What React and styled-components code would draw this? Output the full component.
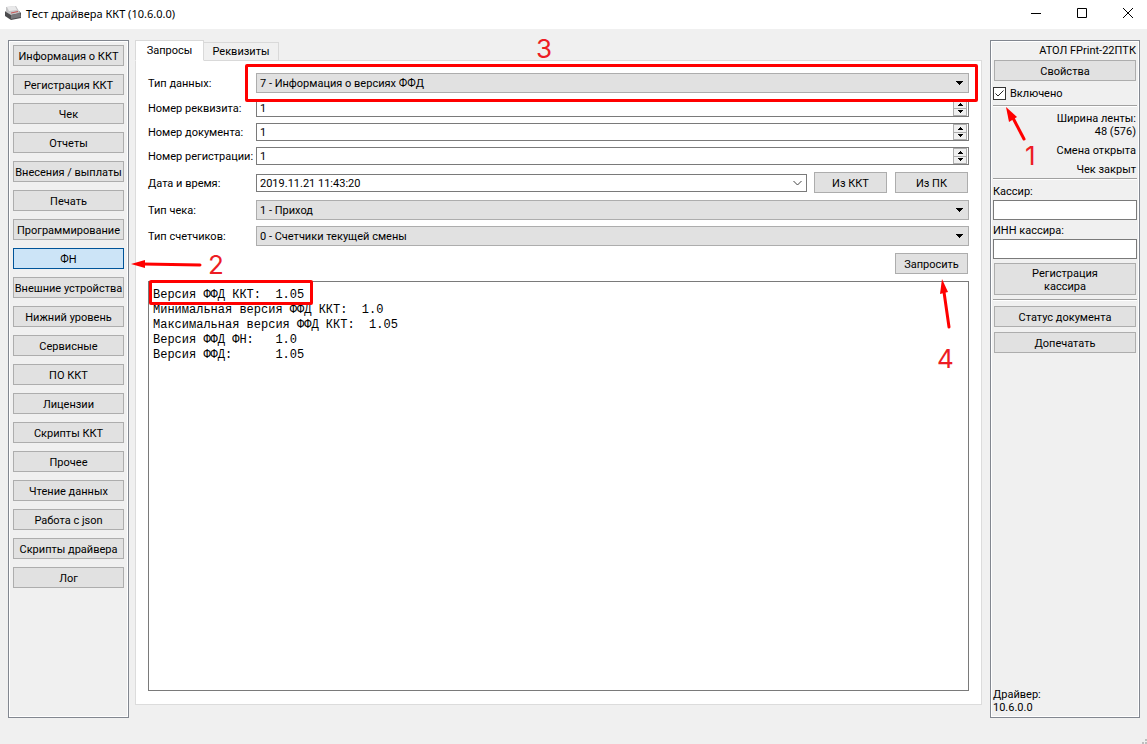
import styled, { createGlobalStyle } from "styled-components";

const GlobalStyle = createGlobalStyle`
    *, *::before, *::after {
        box-sizing: border-box;
    }
    body {
        margin: 0;
        background-color: #f0f0f0;
    }
    body, button, input, select, textarea {
        font-family: Roboto, "DejaVu Sans Condensed", sans-serif;
        font-size: 11px;
        line-height: 13px;
        color: #000;
    }
`

const Window = styled.div`
    min-height: 100vh;
    display: flex;
    flex-direction: column;
    position: relative;
`

const TitleBar = styled.header`
    display: flex;
    align-items: flex-start;
    height: 29px;
    padding: 5px 0 0 5px;
    overflow: hidden;
    background-color: #fff;
    & h1 {
        flex: 1;
        margin: 0 0 0 5px;
        font-family: "Noto Sans", "Open Sans", sans-serif;
        font-size: 11px;
        font-weight: 400;
        line-height: 17px;
    }
`

const WindowButton = styled.button`
    display: flex;
    align-items: center;
    justify-content: center;
    width: 46px;
    height: 16px;
    padding: 0;
    border: 0;
    background: none;
    &:last-child {
        margin-right: -4px;
    }
`

const Main = styled.main`
    flex: 1;
    display: flex;
    padding: 11px 7px 26px 8px;
`

const Panel = styled.aside`
    display: flex;
    flex-direction: column;
    border: 1px solid #828790;
    box-shadow: inset 0 0 0 1px #fff;
`

const Menu = styled(Panel).attrs({ as: "nav" })`
    flex: 0 0 121px;
    min-width: 0;
    gap: 8px;
    padding: 4px;
    margin-right: 6px;
`

const Button = styled.button`
    position: relative;
    display: block;
    height: ${({ $tall }) => ($tall ? "32px" : "21px")};
    padding: 1px 0 0;
    border: 1px solid ${({ $active }) => ($active ? "#005499" : "#adadad")};
    background-color: ${({ $active }) => ($active ? "#cce4f7" : "#e1e1e1")};
    white-space: nowrap;
`

const Center = styled.section`
    flex: 1;
    min-width: 0;
    display: flex;
    flex-direction: column;
    margin: 0 8px 13px 0;
`

const Tabs = styled.div`
    display: flex;
    align-items: flex-end;
    height: 21px;
    margin-bottom: -1px;
    z-index: 1;
`

const Tab = styled.button`
    height: ${({ $active }) => ($active ? "21px" : "19px")};
    width: ${({ $active }) => ($active ? "69px" : "75px")};
    padding: 0;
    border: 1px solid #d9d9d9;
    border-left-width: ${({ $active }) => ($active ? "1px" : "0")};
    border-bottom-color: ${({ $active }) => ($active ? "#fff" : "#d9d9d9")};
    background-color: ${({ $active }) => ($active ? "#fff" : "#f0f0f0")};
`

const Pane = styled.form`
    flex: 1;
    display: flex;
    flex-direction: column;
    gap: 6px;
    padding: 12px 12px 13px;
    border: 1px solid #dcdcdc;
    background-color: #fff;
`

const Row = styled.div`
    display: flex;
    align-items: center;
    gap: 6px;
    & > label {
        flex: 0 0 102px;
        min-width: 0;
        padding-top: 1px;
        white-space: nowrap;
    }
    & > ${Button} {
        width: 73px;
        margin: 1px;
    }
`

const Actions = styled(Row)`
    justify-content: flex-end;
`

const Control = styled.div`
    flex: 1;
    position: relative;
    display: flex;
`

const Select = styled.select`
    appearance: none;
    flex: 1;
    height: ${({ $edit }) => ($edit ? "18px" : "20px")};
    padding: 1px 20px 0 3px;
    border: 1px solid ${({ $edit }) => ($edit ? "#7a7a7a" : "#adadad")};
    border-radius: 0;
    background-color: ${({ $edit }) => ($edit ? "#fff" : "#e1e1e1")};
`

const SelectMark = styled.svg`
    position: absolute;
    right: 5px;
    top: 50%;
    transform: translateY(-50%);
    pointer-events: none;
`

const Input = styled.input`
    flex: ${({ $short }) => ($short ? "1" : "none")};
    width: 100%;
    height: ${({ $short }) => ($short ? "18px" : "20px")};
    padding: 1px 3px 0;
    border: 1px solid #7a7a7a;
    border-radius: 0;
    background-color: #fff;
`

const Spin = styled.div`
    position: absolute;
    right: 2px;
    top: 1px;
    bottom: 1px;
    display: flex;
    flex-direction: column;
    width: 14px;
    & button {
        flex: 1;
        display: flex;
        align-items: center;
        justify-content: center;
        min-height: 0;
        padding: 0;
        border: 1px solid #adadad;
        background-color: #f0f0f0;
    }
    & button + button {
        border-top: 0;
    }
`

const OutputBox = styled.div`
    flex: 1;
    position: relative;
    display: flex;
`

const Output = styled.textarea`
    flex: 1;
    padding: 6px 4px 5px;
    border: 1px solid #7a7a7a;
    resize: none;
    outline: 0;
    font-family: "Liberation Mono", monospace;
    font-size: 12px;
    line-height: 15px;
`

const Status = styled(Panel)`
    flex: 0 0 150px;
    padding: 3px 2px;
`

const StatusText = styled.p`
    margin: 0;
    padding-right: 1px;
    text-align: right;
    white-space: nowrap;
`

const Stack = styled.div`
    display: flex;
    flex-direction: column;
    gap: ${({ $gap }) => $gap}px;
    padding: 0 ${({ $inset }) => ($inset ? "1px" : "0")};
`

const Rule = styled.hr`
    width: 100%;
    height: 2px;
    margin: ${({ $top }) => $top}px 0 5px;
    border: 0;
    border-top: 1px solid #a0a0a0;
    background-color: #fff;
`

const Enabled = styled.label`
    position: relative;
    display: flex;
    align-items: center;
    gap: 4px;
    margin-top: 6px;
`

const Check = styled.input`
    appearance: none;
    width: 13px;
    height: 13px;
    margin: 0;
    border: 1px solid #333;
    background-color: #fff;
`

const CheckMark = styled.svg`
    position: absolute;
    left: 0;
    top: 0;
    pointer-events: none;
`

const Field = styled.label`
    display: flex;
    flex-direction: column;
    gap: 2px;
`

const Version = styled.p`
    margin: auto 0 0;
`

const Frame = styled.div`
    position: absolute;
    z-index: 2;
    border: 3px solid #f00;
    border-radius: 2px;
    pointer-events: none;
`

const DataFrame = styled(Frame)`
    inset: -9px -9px -9px -11px;
`

const ResultFrame = styled(Frame)`
    left: 1px;
    top: -1px;
    width: 164px;
    height: 25px;
`

const Note = styled.span`
    position: absolute;
    z-index: 3;
    left: ${({ $x }) => $x}px;
    top: ${({ $y }) => $y}px;
    font-family: Inter, "Liberation Sans", sans-serif;
    font-size: 26px;
    font-weight: 400;
    line-height: 26px;
    color: #ed1c24;
    pointer-events: none;
`

const Arrow = styled.svg`
    position: absolute;
    z-index: 3;
    left: ${({ $x }) => $x}px;
    top: ${({ $y }) => $y}px;
    fill: #f00;
    stroke: #f00;
    pointer-events: none;
`

const Grip = styled.svg`
    position: absolute;
    right: 0;
    bottom: 0;
    fill: #bfbfbf;
`

const sections = [
    "Информация о ККТ",
    "Регистрация ККТ",
    "Чек",
    "Отчеты",
    "Внесения / выплаты",
    "Печать",
    "Программирование",
    "ФН",
    "Внешние устройства",
    "Нижний уровень",
    "Сервисные",
    "ПО ККТ",
    "Лицензии",
    "Скрипты ККТ",
    "Прочее",
    "Чтение данных",
    "Работа с json",
    "Скрипты драйвера",
    "Лог",
]

const result = `Версия ФФД ККТ:  1.05
Минимальная версия ФФД ККТ:  1.0
Максимальная версия ФФД ККТ:  1.05
Версия ФФД ФН:   1.0
Версия ФФД:      1.05`

const Printer = () => (
    <svg width="16" height="16" viewBox="0 0 16 16" aria-hidden="true">
        <path d="M0 7L2 5L14 6L16 8V13L6 15L0 11Z" fill="#4b4b4d" />
        <path d="M1 2L11 1L15 8L6 10L1 7Z" fill="#c4c4c6" />
        <path d="M2 2L10 1L12 5L4 6Z" fill="#e9e9ea" />
        <path d="M6 10L15 8L16 12L6 14Z" fill="#77777a" />
        <path d="M6 8L13 6.500" stroke="#c65555" />
    </svg>
)

const DropList = ({ id, label, value, children }) => (
    <Row>
        <label htmlFor={id}>{label}</label>
        <Control>
            <Select id={id} defaultValue={value}>
                <option>{value}</option>
            </Select>
            <SelectMark width="9" height="4" viewBox="0 0 9 4">
                <path d="M1 0h7v1H7v1H6v1H5v1H4V3H3V2H2V1H1z" />
            </SelectMark>
            {children}
        </Control>
    </Row>
)

const NumberRow = ({ id, label }) => (
    <Row>
        <label htmlFor={id}>{label}</label>
        <Control>
            <Input id={id} $short defaultValue="1" />
            <Spin>
                <button type="button" aria-label="+">
                    <svg width="5" height="3" viewBox="0 0 5 3"><path d="M2 0h1v1h1v1h1v1H0V2h1V1h1z" /></svg>
                </button>
                <button type="button" aria-label="-">
                    <svg width="5" height="3" viewBox="0 0 5 3"><path d="M0 0h5v1H4v1H3v1H2V2H1V1H0z" /></svg>
                </button>
            </Spin>
        </Control>
    </Row>
)

const App = () => {
    return (
        <Window>
            <GlobalStyle />
            <TitleBar>
                <Printer />
                <h1>Тест драйвера ККТ (10.6.0.0)</h1>
                <WindowButton aria-label="Свернуть">
                    <svg width="10" height="10"><path d="M0 5h10v1H0z" /></svg>
                </WindowButton>
                <WindowButton aria-label="Развернуть">
                    <svg width="10" height="10"><path d="M.5.5h9v9h-9z" fill="none" stroke="#000" /></svg>
                </WindowButton>
                <WindowButton aria-label="Закрыть">
                    <svg width="10" height="10"><path d="M0 0l10 10M10 0L0 10" stroke="#000" /></svg>
                </WindowButton>
            </TitleBar>
            <Main>
                <Menu>
                    {sections.map((name) => (
                        <Button key={name} $active={name === "ФН"}>
                            {name}
                            {name === "ФН" && (
                                <>
                                    <Arrow $x={117} $y={8} width="72" height="16">
                                        <path d="M0 7L14 3V11Z" stroke="none" />
                                        <path d="M12 7L69 8" strokeWidth="3" strokeLinecap="round" />
                                    </Arrow>
                                    <Note $x={194} $y={3}>2</Note>
                                </>
                            )}
                        </Button>
                    ))}
                </Menu>
                <Center>
                    <Tabs role="tablist">
                        <Tab role="tab" aria-selected="true" $active>Запросы</Tab>
                        <Tab role="tab" aria-selected="false">Реквизиты</Tab>
                    </Tabs>
                    <Pane>
                        <DropList id="data" label="Тип данных:" value="7 - Информация о версиях ФФД">
                            <DataFrame />
                            <Note $x={280} $y={-37}>3</Note>
                        </DropList>
                        <NumberRow id="prop" label="Номер реквизита:" />
                        <NumberRow id="doc" label="Номер документа:" />
                        <NumberRow id="reg" label="Номер регистрации:" />
                        <Row>
                            <label htmlFor="date">Дата и время:</label>
                            <Control>
                                <Select id="date" $edit>
                                    <option>2019.11.21 11:43:20</option>
                                </Select>
                                <SelectMark width="9" height="5" viewBox="0 0 9 5">
                                    <path d="M.5.5L4.5 4.5L8.5.5" fill="none" stroke="#444" />
                                </SelectMark>
                            </Control>
                            <Button type="button">Из ККТ</Button>
                            <Button type="button">Из ПК</Button>
                        </Row>
                        <DropList id="receipt" label="Тип чека:" value="1 - Приход" />
                        <DropList id="counter" label="Тип счетчиков:" value="0 - Счетчики текущей смены" />
                        <Actions>
                            <Button type="button">
                                Запросить
                                <Arrow $x={40} $y={25} width="20" height="52">
                                    <path d="M6 0L12 13L4 15Z" stroke="none" />
                                    <path d="M8 13L13 48" strokeWidth="3" strokeLinecap="round" />
                                </Arrow>
                                <Note $x={41} $y={92}>4</Note>
                            </Button>
                        </Actions>
                        <OutputBox>
                            <Output aria-label="Результат" spellCheck="false" readOnly value={result} />
                            <ResultFrame />
                        </OutputBox>
                    </Pane>
                </Center>
                <Status>
                    <StatusText>АТОЛ FPrint-22ПТК</StatusText>
                    <Stack $gap={3} $inset>
                        <span />
                        <Button>Свойства</Button>
                    </Stack>
                    <Enabled>
                        <Check type="checkbox" defaultChecked />
                        <CheckMark width="13" height="13">
                            <path d="M2.500 6.500L5 9L10.500 3.500" fill="none" stroke="#222" />
                        </CheckMark>
                        Включено
                        <Arrow $x={12} $y={19} width="22" height="38">
                            <path d="M1 1L12 11L4 16Z" stroke="none" />
                            <path d="M8 12L19 33" strokeWidth="3" strokeLinecap="round" />
                        </Arrow>
                        <Note $x={32} $y={56}>1</Note>
                    </Enabled>
                    <Rule $top={5} />
                    <Stack $gap={6}>
                        <StatusText>Ширина ленты:<br />48 (576)</StatusText>
                        <StatusText>Смена открыта</StatusText>
                        <StatusText>Чек закрыт</StatusText>
                    </Stack>
                    <Rule $top={2} />
                    <Stack $gap={4}>
                        <Field>Кассир:<Input /></Field>
                        <Field>ИНН кассира:<Input /></Field>
                        <Stack $inset>
                            <Button $tall>Регистрация<br />кассира</Button>
                        </Stack>
                    </Stack>
                    <Rule $top={4} />
                    <Stack $gap={5} $inset>
                        <Button>Статус документа</Button>
                        <Button>Допечатать</Button>
                    </Stack>
                    <Version>Драйвер:<br />10.6.0.0</Version>
                </Status>
            </Main>
            <Grip width="5" height="5"><path d="M3 0h2v2H3zM0 3h2v2H0zM3 3h2v2H3z" /></Grip>
        </Window>
    )
}

export default App;
